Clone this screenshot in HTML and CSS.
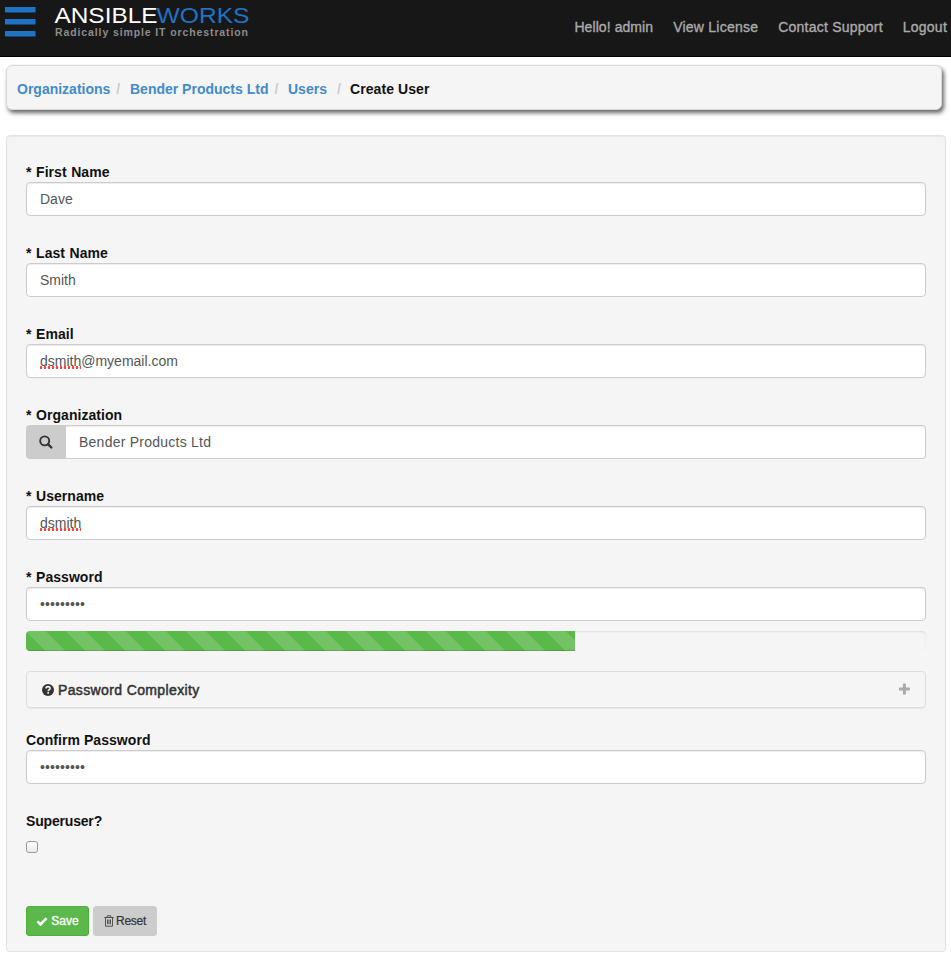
FILE: index.html
```
<!DOCTYPE html>
<html lang="en">
<head>
<meta charset="utf-8">
<title>Create User</title>
<link rel="stylesheet" href="styles.css">
</head>
<body>
<header class="navbar">
  <svg class="logo" width="260" height="44" viewBox="0 0 260 44">
    <g fill="#1f73c4"><rect x="5" y="7" width="30.5" height="5.500"/><rect x="5" y="19" width="30.5" height="5.500"/><rect x="5" y="31" width="30.5" height="5.500"/></g>
    <text class="brand" x="54.5" y="23" textLength="103" lengthAdjust="spacingAndGlyphs" fill="#fff">ANSIBLE</text>
    <text class="brand" x="156.5" y="23" textLength="93" lengthAdjust="spacingAndGlyphs" fill="#1f73c4">WORKS</text>
    <text class="tagline" x="55" y="36.3" textLength="193" fill="#8c8c8c">Radically simple IT orchestration</text>
  </svg>
  <nav class="links"><a class="hello">Hello! admin</a><a>View License</a><a>Contact Support</a><a>Logout</a></nav>
</header>
<ol class="breadcrumb">
  <li class="org"><a>Organizations</a></li>
  <li class="ltd"><a>Bender Products Ltd</a></li>
  <li class="users"><a>Users</a></li>
  <li class="current">Create User</li>
</ol>
<main class="well">
  <div class="group required"><label>* First Name</label><div class="control">Dave</div></div>
  <div class="group required"><label>* Last Name</label><div class="control">Smith</div></div>
  <div class="group required"><label>* Email</label><div class="control"><span class="misspelled">dsmith</span>@myemail.com</div></div>
  <div class="group required"><label>* Organization</label>
    <div class="lookup">
      <span class="addon"><svg width="14" height="14" viewBox="0 0 14 14" fill="none" stroke="#333" stroke-width="1.9"><circle cx="5.7" cy="5.9" r="4.5"/><path d="M9 9.200l3.300 3.300" stroke-width="2.4" stroke-linecap="round"/></svg></span>
      <div class="control">Bender Products Ltd</div>
    </div>
  </div>
  <div class="group required"><label>* Username</label><div class="control"><span class="misspelled">dsmith</span></div></div>
  <div class="group required password"><label>* Password</label><div class="control dots">•••••••••</div></div>
  <div class="progress"><div class="bar"></div></div>
  <div class="accordion">
    <svg width="12" height="12" viewBox="0 0 12 12"><circle cx="6" cy="6" r="6" fill="#333"/><path d="M3.9 4.5C4 3.1 5 2.6 6 2.6c1.2 0 2.1.7 2.1 1.8C8.100 5.700 6.200 5.700 6.200 7.200" fill="none" stroke="#f5f5f5" stroke-width="1.6"/><rect x="5.300" y="8.100" width="1.700" height="1.600" fill="#f5f5f5"/></svg>
    <span>Password Complexity</span>
    <svg class="plus" width="12" height="12" viewBox="0 0 12 12" fill="#aaa"><rect x="4.900" y=".5" width="3" height="11" rx=".6"/><rect x=".9" y="4.500" width="11" height="3" rx=".6"/></svg>
  </div>
  <div class="group"><label>Confirm Password</label><div class="control dots">•••••••••</div></div>
  <div class="group superuser"><label>Superuser?</label><span class="checkbox"></span></div>
  <div class="buttons">
    <button class="btn save"><svg width="12" height="12" viewBox="0 0 12 12"><path d="M1.500 6.300l3 3L10.500 3.200" fill="none" stroke="#fff" stroke-width="2.600"/></svg><span>Save</span></button>
    <button class="btn reset"><svg width="10" height="12" viewBox="0 0 10 12" fill="none" stroke="#444"><path d="M.3 2.500h9.400M3.200 2.300V.8h3.600v1.500M1.500 2.500v8.700h7V2.500M3.500 4.500v4.700M5 4.500v4.700M6.500 4.500v4.700" stroke-width=".9"/></svg><span>Reset</span></button>
  </div>
</main>
</body>
</html>
```
FILE: styles.css
```
* { box-sizing: border-box; }
body {
  margin: 0;
  background: #fff;
  color: #111;
  font: 14px/20px "Liberation Sans", Arial, sans-serif;
}
.navbar {
  display: flex;
  justify-content: space-between;
  height: 57px;
  background: #171717;
  border-bottom: 1px solid #000;
}
.brand { font: 22.5px "Liberation Sans", sans-serif; }
.tagline { font: bold 10.5px "Liberation Sans", sans-serif; }
.links {
  display: flex;
  gap: 20px;
  padding: 17px 4px 0 0;
  color: #aaa;
  letter-spacing: 0.23px;
  -webkit-text-stroke: 0.35px #aaa;
}
.links .hello { letter-spacing: 0.08px; }
.links a { white-space: nowrap; }
.breadcrumb {
  display: flex;
  height: 45px;
  margin: 8px 9px 0 6px;
  padding: 13px 10px;
  list-style: none;
  font-weight: bold;
  background: #f5f5f5;
  border: 1px solid #d8d8d8;
  border-radius: 6px;
  box-shadow: 2px 3px 4px #666;
}
.breadcrumb a { color: #428bca; }
.breadcrumb li:not(:last-child)::after {
  content: "/";
  padding-left: 6px;
  color: #ccc;
}
.org { width: 113px; }
.ltd { width: 158px; }
.users { width: 62px; }
.users a { margin-right: 4px; }
.current { letter-spacing: 0.08px; }
.well {
  height: 817px;
  margin: 25px 5px 0 6px;
  padding: 26px 19px 0;
  background: #f5f5f5;
  border: 1px solid #e3e3e3;
  border-radius: 4px;
  box-shadow: inset 0 1px 1px rgba(0, 0, 0, .05);
}
.group { margin-bottom: 27px; }
.group label { display: block; font-weight: bold; letter-spacing: 0.05px; }
.required label { word-spacing: 0.6px; }
.superuser label { letter-spacing: -0.18px; }
.control {
  height: 34px;
  padding: 6px 13px;
  color: #555;
  background: #fff;
  border: 1px solid #ccc;
  border-radius: 4px;
  box-shadow: inset 0 1px 1px rgba(0, 0, 0, .075);
}
.misspelled {
  background: radial-gradient(circle, #f0483e 1.1px, transparent 1.6px) -1px 100% / 4px 3px repeat-x;
}
.lookup { display: flex; }
.lookup .control {
  flex: 1;
  letter-spacing: 0.24px;
  border-left: 0;
  border-radius: 0 4px 4px 0;
}
.addon {
  display: flex;
  align-items: center;
  justify-content: center;
  width: 40px;
  height: 34px;
  background: #ccc;
  border-radius: 4px 0 0 4px;
}
.dots { letter-spacing: 0.1px; }
.password { margin-bottom: 10px; }
.progress {
  height: 20px;
  margin-bottom: 20px;
  overflow: hidden;
  border-radius: 4px;
  box-shadow: inset 0 1px 2px rgba(0, 0, 0, .1);
}
.bar {
  width: 61%;
  height: 100%;
  background: linear-gradient(45deg, transparent 25%, rgba(255, 255, 255, .15) 25%, rgba(255, 255, 255, .15) 50%, transparent 50%, transparent 75%, rgba(255, 255, 255, .15) 75%) 20px 0 / 40px 40px #5bb84a;
  box-shadow: inset 0 -1px 0 rgba(0, 0, 0, .15);
}
.accordion {
  display: flex;
  align-items: center;
  gap: 4px;
  height: 37px;
  margin-bottom: 22px;
  padding: 0 15px;
  color: #333;
  letter-spacing: 0.37px;
  -webkit-text-stroke: 0.5px #333;
  border: 1px solid #ddd;
  border-radius: 4px;
  box-shadow: 0 1px 1px rgba(0, 0, 0, .05);
}
.plus { margin: -2px 0 0 auto; }
.superuser { margin-bottom: 53px; }
.checkbox {
  display: block;
  width: 12px;
  height: 12px;
  margin-top: 10px;
  background: linear-gradient(#fff, #eaeaea);
  border: 1px solid #999;
  border-radius: 3px;
}
.buttons { display: flex; gap: 4px; }
.btn {
  display: flex;
  align-items: center;
  justify-content: center;
  height: 30px;
  padding: 0;
  font: 12px/18px "Liberation Sans", Arial, sans-serif;
  border: 1px solid #ccc;
  border-radius: 3px;
}
.save {
  width: 63px;
  gap: 3px;
  color: #fff;
  background: #5bb84a;
  border-color: #4cae3b;
  -webkit-text-stroke: 0.35px #fff;
}
.reset {
  width: 64px;
  gap: 2px;
  color: #333;
  letter-spacing: -0.3px;
  background: #ccc;
  -webkit-text-stroke: 0.2px #333;
}
```
